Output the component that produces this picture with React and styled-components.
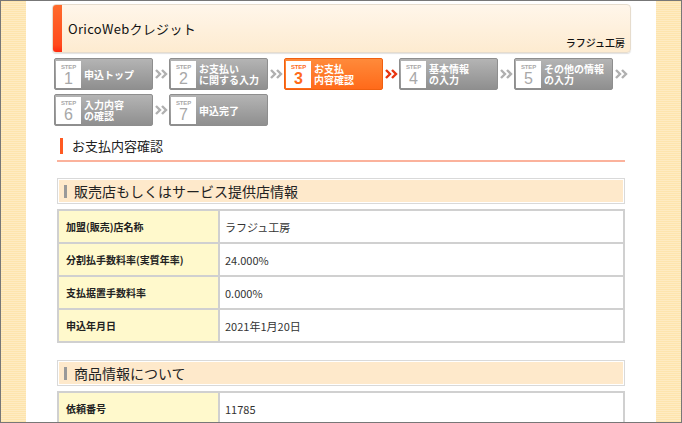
import React from 'react';
import styled, { createGlobalStyle } from 'styled-components';

const GlobalStyle = createGlobalStyle`
  html, body {
    margin: 0;
    padding: 0;
    background: #ffffff;
  }
  body {
    font-family: "Noto Sans CJK JP", "Noto Sans", sans-serif;
    color: #333;
  }
`;

const Frame = styled.div`
  width: 682px;
  height: 423px;
  box-sizing: border-box;
  border: 1px solid #777;
  overflow: hidden;
  display: grid;
  grid-template-columns: 25px 1fr 25px;
`;

const Stripe = styled.div`
  background: repeating-linear-gradient(
    to bottom,
    #fde4ad 0px,
    #fde4ad 1px,
    #feebc2 1px,
    #feebc2 2px
  );
`;

const Center = styled.div`
  background: #fff;
  padding: 3px 0 0 26px;
  overflow: hidden;
`;

const Header = styled.div`
  width: 579px;
  height: 49px;
  box-sizing: border-box;
  border: 1px solid #e6dccd;
  border-radius: 4px;
  background: linear-gradient(to bottom, #fff6ea, #fdebd0);
  box-shadow: 0 1px 1px rgba(0, 0, 0, 0.12);
  display: flex;
  position: relative;
`;

const HeaderBar = styled.div`
  width: 9px;
  border-radius: 3px 0 0 3px;
  background: linear-gradient(to bottom, #ff6b2c, #ff4a1c 85%, #ff2a10);
`;

const Title = styled.div`
  padding-left: 6px;
  font-size: 13px;
  line-height: 47px;
  color: #111;
  letter-spacing: 0.3px;
`;

const ShopName = styled.div`
  position: absolute;
  right: 5px;
  bottom: 2px;
  font-size: 10px;
  font-weight: 500;
  color: #111;
`;

const Steps = styled.div`
  display: flex;
  flex-wrap: wrap;
  row-gap: 4px;
  margin: 5px 0 0 2px;
  width: 590px;
`;

const StepItem = styled.div`
  display: flex;
  align-items: center;
`;

const StepBox = styled.div`
  width: 99px;
  height: 32px;
  box-sizing: border-box;
  border: 1px solid ${p => (p.$active ? '#f06010' : '#8e8e8e')};
  border-radius: 2px;
  background: ${p =>
    p.$active
      ? 'linear-gradient(to bottom, #ff8a3a, #ff6a1a)'
      : 'linear-gradient(to bottom, #b4b4b4, #8f8f8f)'};
  display: flex;
  align-items: center;
  padding: 0 1px;
  gap: 3px;
`;

const StepNum = styled.div`
  width: 25px;
  height: 27px;
  background: #fff;
  display: flex;
  flex-direction: column;
  align-items: center;
  font-family: "Liberation Sans", Arial, sans-serif;
  color: ${p => (p.$active ? '#ff6a1a' : '#a8a8a8')};
  span {
    font-size: 6px;
    font-weight: bold;
    line-height: 8px;
    margin-top: 2px;
    letter-spacing: -0.2px;
  }
  b {
    font-size: 16px;
    line-height: 16px;
    font-weight: ${p => (p.$active ? 'bold' : 'normal')};
  }
`;

const StepLabel = styled.div`
  color: #fff;
  font-size: 10px;
  font-weight: bold;
  line-height: 11px;
  white-space: pre;
`;

const Chevron = styled.svg`
  width: 16px;
  height: 12px;
  display: block;
`;

const Section = styled.div`
  width: 568px;
  margin: 6px 0 0 5px;
`;

const PageTitle = styled.h2`
  margin: 0;
  height: 30px;
  box-sizing: border-box;
  border-bottom: 2px solid #fbb29c;
  display: flex;
  align-items: center;
  gap: 9px;
  padding: 0 0 1px 3px;
  font-size: 13px;
  font-weight: normal;
  color: #222;
  &::before {
    content: '';
    width: 3px;
    height: 16px;
    background: #ff5a22;
  }
`;

const SubHeader = styled.h3`
  margin: ${p => p.$top}px 0 5px;
  height: 26px;
  box-sizing: border-box;
  border: 1px solid #d9d9d9;
  box-shadow: inset 0 0 0 1px #fff;
  background: #fee9cb;
  display: flex;
  align-items: center;
  gap: 7px;
  padding-left: 6px;
  font-size: 14px;
  font-weight: normal;
  color: #222;
  &::before {
    content: '';
    width: 3px;
    height: 13px;
    background: #999;
  }
`;

const Table = styled.table`
  width: 100%;
  border-collapse: collapse;
  border: 2px solid #d0d0d0;
`;

const Label = styled.td`
  width: 152px;
  height: 31px;
  background: #fff9cc;
  border: 2px solid #d0d0d0;
  padding: 0 0 0 7px;
  font-size: 10px;
  font-weight: bold;
  color: #222;
`;

const Value = styled.td`
  border: 2px solid #d0d0d0;
  padding: 0 0 0 5px;
  font-size: 11px;
  color: #333;
`;

const steps = [
  { n: 1, label: '申込トップ' },
  { n: 2, label: 'お支払い\nに関する入力' },
  { n: 3, label: 'お支払\n内容確認', active: true },
  { n: 4, label: '基本情報\nの入力' },
  { n: 5, label: 'その他の情報\nの入力' },
  { n: 6, label: '入力内容\nの確認' },
  { n: 7, label: '申込完了', last: true },
];

const shopRows = [
  ['加盟(販売)店名称', 'ラフジュ工房'],
  ['分割払手数料率(実質年率)', '24.000%'],
  ['支払据置手数料率', '0.000%'],
  ['申込年月日', '2021年1月20日'],
];

function Arrow({ color }) {
  return (
    <Chevron viewBox="0 0 16 12">
      <polyline points="3,2 7,6 3,10" fill="none" stroke={color} strokeWidth="2.4" />
      <polyline points="9,2 13,6 9,10" fill="none" stroke={color} strokeWidth="2.4" />
    </Chevron>
  );
}

export default function App() {
  return (
    <>
      <GlobalStyle />
      <Frame>
        <Stripe />
        <Center>
          <Header>
            <HeaderBar />
            <Title>OricoWebクレジット</Title>
            <ShopName>ラフジュ工房</ShopName>
          </Header>

          <Steps>
            {steps.map(s => (
              <StepItem key={s.n}>
                <StepBox $active={s.active}>
                  <StepNum $active={s.active}>
                    <span>STEP</span>
                    <b>{s.n}</b>
                  </StepNum>
                  <StepLabel>{s.label}</StepLabel>
                </StepBox>
                {!s.last && <Arrow color={s.active ? '#e8340f' : '#b0b0b0'} />}
              </StepItem>
            ))}
          </Steps>

          <Section>
            <PageTitle>お支払内容確認</PageTitle>

            <SubHeader $top={16}>販売店もしくはサービス提供店情報</SubHeader>
            <Table>
              <tbody>
                {shopRows.map(([k, v]) => (
                  <tr key={k}>
                    <Label>{k}</Label>
                    <Value>{v}</Value>
                  </tr>
                ))}
              </tbody>
            </Table>

            <SubHeader $top={17}>商品情報について</SubHeader>
            <Table>
              <tbody>
                <tr>
                  <Label>依頼番号</Label>
                  <Value>11785</Value>
                </tr>
              </tbody>
            </Table>
          </Section>
        </Center>
        <Stripe />
      </Frame>
    </>
  );
}
